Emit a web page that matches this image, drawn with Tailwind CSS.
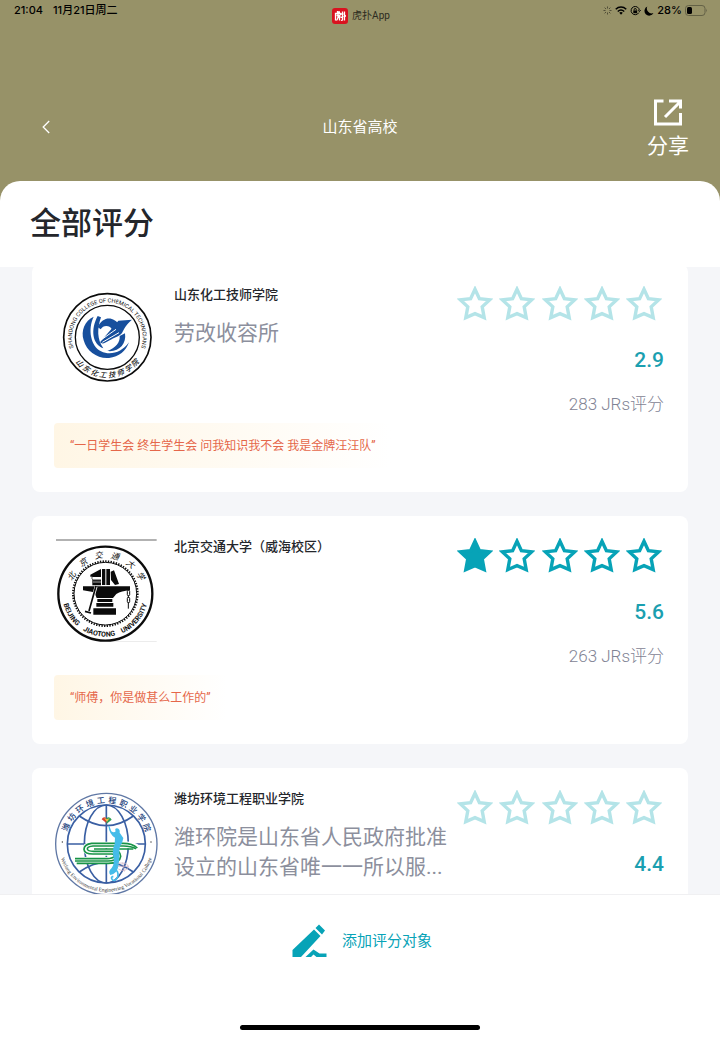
<!DOCTYPE html>
<html lang="zh-CN">
<head>
    <meta charset="UTF-8">
    <meta name="viewport" content="width=device-width, initial-scale=1.0">
    <title>山东省高校</title>
    <script src="https://cdn.jsdelivr.net/npm/@tailwindcss/browser@4"></script>
</head>
<body class="bg-white font-['Roboto','Noto_Sans_CJK_SC',sans-serif]">

    <!-- Shared shapes -->
    <svg class="hidden">
        <symbol id="star" viewBox="0 0 36 36">
            <path d="M18 3.2L22.4 12.6L32.6 13.9L25.2 20.8L27.2 31.6L18 27.6L8.8 31.6L10.8 20.8L3.4 13.9L13.6 12.6Z" fill="none" stroke="currentColor" stroke-width="3.4"/>
        </symbol>
        <symbol id="star-full" viewBox="0 0 36 36">
            <path d="M18 3.2L22.4 12.6L32.6 13.9L25.2 20.8L27.2 31.6L18 27.6L8.8 31.6L10.8 20.8L3.4 13.9L13.6 12.6Z" fill="currentColor" stroke="currentColor" stroke-width="3.4"/>
        </symbol>
    </svg>

    <div class="flex flex-col h-screen bg-[#979268]">
        <header class="shrink-0">
            <!-- Status bar -->
            <div class="grid grid-cols-3 items-start h-24 pl-3.5 pr-3 text-[11px] leading-[13px] text-black">
                <div class="flex gap-2.5 pt-1 font-medium font-['Inter','Noto_Sans_CJK_SC',sans-serif]">
                    <span>21:04</span>
                    <span>11月21日周二</span>
                </div>
                <div class="flex items-center justify-center gap-1 pt-2 text-[10px] leading-4 text-[#2c2b20]">
                    <span class="flex items-center justify-center size-4 rounded-[3px] bg-[#d9121f]">
                        <svg class="size-3" viewBox="0 0 24 24" fill="none" stroke="#fff" stroke-width="2.6">
                            <path d="M7 2V7M7 4H12M3 21V7H13V10M5 11H13M8 8V13H13M7 15V18L5 21M7 15H11V21M14 8H19M17 3V20L14 21M13 15L19 13M21 3V21M21 10L24 13"/>
                        </svg>
                    </span>
                    <span>虎扑App</span>
                </div>
                <div class="flex items-center justify-end gap-[3px] pt-1 font-medium font-['Inter',sans-serif]">
                    <svg class="size-[9px]" viewBox="0 0 18 18" stroke="#3d3b2b" stroke-width="1.6">
                        <path d="M9 1V5M9 13V17M1 9H5M13 9H17M3.3 3.3L6 6M12 12L14.7 14.7M3.3 14.7L6 12M12 6L14.7 3.3"/>
                    </svg>
                    <svg class="w-3 h-[9px]" viewBox="0 0 24 18" fill="none" stroke="#000" stroke-width="3">
                        <path d="M1.5 6.500C7.500 .8 16.500 .8 22.500 6.500M5.500 11C9.500 7.500 14.500 7.500 18.500 11"/>
                        <path d="M8.500 13.500Q12 10.800 15.500 13.500L12 17.500Z" fill="#000" stroke="none"/>
                    </svg>
                    <svg class="w-[11px] h-[10px]" viewBox="0 0 20 18" fill="none" stroke="#000" stroke-width="1.8">
                        <path d="M16 12A7.500 7.500 0 1 1 17 8M14.500 7.500L17 10L19.500 7.500"/>
                        <rect x="6" y="8" width="7" height="5" fill="#000" stroke="none"/>
                        <path d="M7.500 8V6.500A2 2 0 0 1 11.500 6.500V8"/>
                    </svg>
                    <svg class="size-[10px]" viewBox="0 0 18 18">
                        <path d="M6 1A8.500 8.500 0 1 0 17 12.500A8.500 8.500 0 0 1 6 1Z"/>
                    </svg>
                    <span>28%</span>
                    <svg class="w-[23px] h-[11px]" viewBox="0 0 46 22">
                        <rect x="1" y="1" width="39" height="20" rx="6" fill="none" stroke="#5f5c43" stroke-width="1.8"/>
                        <rect x="4" y="4" width="10" height="14" rx="3"/>
                        <path d="M42.500 7.500Q45.500 11 42.500 14.500Z" fill="#5f5c43"/>
                    </svg>
                </div>
            </div>

            <!-- Title bar -->
            <div class="grid grid-cols-3 items-center px-[31px] pb-[23px] text-white">
                <button type="button" aria-label="返回" class="w-[30px] h-5 flex items-center justify-center">
                    <svg class="w-2 h-3.5" viewBox="0 0 8 14" fill="none" stroke="#fff" stroke-width="1.3"><path d="M7.200 1L1.200 7L7.200 13"/></svg>
                </button>
                <h1 class="text-[15px] leading-5 text-center">山东省高校</h1>
                <button type="button" class="flex flex-col items-center justify-self-end">
                    <svg class="size-8" viewBox="0 0 32 32" fill="none" stroke="#fff" stroke-width="3">
                        <path d="M11.500 5H3.500V28H28.500V17M17 5H28.500V12.500M28 6L13 21"/>
                    </svg>
                    <span class="mt-1.5 text-[21px] leading-6">分享</span>
                </button>
            </div>
        </header>

        <h2 class="shrink-0 px-[30px] py-[22px] rounded-t-[20px] bg-white text-[31px] leading-[42px] font-medium text-[#24262b]">全部评分</h2>

        <!-- Rating list -->
        <main class="flex-1 min-h-0 overflow-hidden bg-[#f5f6f9] px-8">
            <div class="flex flex-col gap-6 -mt-[3px]">

                <article class="min-h-[228px] pt-[22px] pb-6 px-[22px] rounded-lg bg-white">
                    <div class="flex h-[137px] px-0.5">
                        <svg class="shrink-0 w-[102px] h-[104px]" viewBox="18 18 306 312">
                            <defs>
                                <path id="a1" d="M71.300 206.300A106 106 0 1 1 272.700 206.300"/>
                            </defs>
                            <circle cx="172" cy="172" r="131" fill="#fff" stroke="#0b0b0b" stroke-width="5"/>
                            <circle cx="172" cy="172" r="96" fill="none" stroke="#0b0b0b" stroke-width="4"/>
                            <text font-size="17" fill="#111" text-anchor="middle"><textPath href="#a1" startOffset="50%">SHANDONG COLLEGE OF CHEMICAL TECHNICIANS</textPath></text>
                            <g font-size="22" font-style="italic" font-weight="500" fill="#111" text-anchor="middle">
                                <text x="172" y="293" transform="rotate(47 172 172)">山</text>
                                <text x="172" y="293" transform="rotate(34 172 172)">东</text>
                                <text x="172" y="293" transform="rotate(20 172 172)">化</text>
                                <text x="172" y="293" transform="rotate(7 172 172)">工</text>
                                <text x="172" y="293" transform="rotate(-7 172 172)">技</text>
                                <text x="172" y="293" transform="rotate(-20 172 172)">师</text>
                                <text x="172" y="293" transform="rotate(-34 172 172)">学</text>
                                <text x="172" y="293" transform="rotate(-47 172 172)">院</text>
                            </g>
                            <g fill="#174f9d">
                                <path d="M131 110C104 122 92 152 101 181C110 214 142 237 177 234C207 231 228 213 237 187C216 217 181 228 153 214C123 199 112 149 131 110Z"/>
                                <path d="M143 108C121 150 127 192 160 205C141 178 141 147 153 112Z"/>
                                <path d="M143 141C160 106 192 110 207 134L193 155L180 141C170 135 158 137 152 148Z"/>
                                <path d="M150 187L186 145L205 122L246 119C229 132 221 149 216 159C208 170 191 173 179 181C163 191 157 193 150 187Z"/>
                                <path d="M225 160C230 193 207 217 172 213C197 204 211 187 209 168Z"/>
                            </g>
                            <path d="M153 180L198 148M157 187L207 158" stroke="#fff" stroke-width="3"/>
                        </svg>
                        <div class="flex-1 min-w-0 ml-4">
                            <h3 class="text-[13px] leading-[18px] font-medium text-[#24262b]">山东化工技师学院</h3>
                            <p class="mt-3.5 text-[21px] leading-[30px] text-[#8c8f9d]">劳改收容所</p>
                        </div>
                        <div class="shrink-0 w-[207px] ml-2 text-right">
                            <div class="flex justify-between pr-0.5 text-[#b4e4e8]" role="img" aria-label="0 星">
                                <svg class="size-9"><use href="#star"/></svg>
                                <svg class="size-9"><use href="#star"/></svg>
                                <svg class="size-9"><use href="#star"/></svg>
                                <svg class="size-9"><use href="#star"/></svg>
                                <svg class="size-9"><use href="#star"/></svg>
                            </div>
                            <p class="mt-[26px] text-[21px] leading-6 font-medium text-[#1b9fb0]">2.9</p>
                            <p class="mt-5 text-[17px] leading-6 font-light text-[#7f8394]">283 JRs评分</p>
                        </div>
                    </div>
                    <p class="w-fit pt-0.5 px-4 rounded bg-linear-to-r from-[#fff6e5] to-white text-[12px] leading-[43px] text-[#e5674a]">“一日学生会 终生学生会 问我知识我不会 我是金牌汪汪队”</p>
                </article>

                <article class="min-h-[228px] pt-[22px] pb-6 px-[22px] rounded-lg bg-white">
                    <div class="flex h-[137px] px-0.5">
                        <svg class="shrink-0 w-[102px] h-[104px]" viewBox="18 24 306 312">
                            <defs>
                                <path id="b1" d="M37 191A129 129 0 0 0 295 191"/>
                            </defs>
                            <path d="M18 30H320" stroke="#999" stroke-width="4"/>
                            <path d="M180 335H320" stroke="#ddd" stroke-width="2"/>
                            <circle cx="166" cy="191" r="141" fill="#fff" stroke="#0b0b0b" stroke-width="7"/>
                            <circle cx="166" cy="191" r="94" fill="none" stroke="#0b0b0b" stroke-width="3"/>
                            <circle cx="166" cy="191" r="97" fill="none" stroke="#0b0b0b" stroke-width="6" stroke-dasharray="4 4"/>
                            <g font-size="25" font-style="italic" fill="#111" text-anchor="middle">
                                <text transform="translate(72 143) rotate(-60)">北</text>
                                <text transform="translate(104 105) rotate(-34)">京</text>
                                <text transform="translate(147 85) rotate(-10)">交</text>
                                <text transform="translate(193 87) rotate(14)">通</text>
                                <text transform="translate(236 109) rotate(38)">大</text>
                                <text transform="translate(264 142) rotate(60)">学</text>
                            </g>
                            <text font-size="21" font-weight="700" fill="#111" text-anchor="middle"><textPath href="#b1" startOffset="50%">BEIJING &#160; &#160;JIAOTONG &#160; &#160;UNIVERSITY</textPath></text>
                            <g fill="#0b0b0b">
                                <path d="M121 134L153 117V141H125V147H153V166H127V140H121ZM156 117H166V165H156ZM169 117H180V165H169ZM182 125L192 121L207 162L195 165L183 150Z"/>
                                <path d="M99 169H240V181Q214 183 199 192L189 204H140L133 187L99 181Z"/>
                                <path d="M142 207H187V216H142ZM139 219H190V230H139ZM130 235H198V254H130Z"/>
                            </g>
                            <path d="M129 149H153M129 156H153" stroke="#fff" stroke-width="2"/>
                            <path d="M138 170L117 245" stroke="#fff" stroke-width="9"/>
                            <path d="M138 168L117 243M105 244L123 249" stroke="#0b0b0b" stroke-width="5"/>
                            <g fill="none" stroke="#0b0b0b" stroke-width="3">
                                <rect x="232" y="181" width="7" height="16" rx="3"/>
                                <rect x="232" y="202" width="7" height="16" rx="3"/>
                                <path d="M235 196V204M235 217V236"/>
                            </g>
                        </svg>
                        <div class="flex-1 min-w-0 ml-4">
                            <h3 class="text-[13px] leading-[18px] font-medium text-[#24262b]">北京交通大学（威海校区）</h3>
                        </div>
                        <div class="shrink-0 w-[207px] ml-2 text-right">
                            <div class="flex justify-between pr-0.5 text-[#07a3b7]" role="img" aria-label="1 星">
                                <svg class="size-9"><use href="#star-full"/></svg>
                                <svg class="size-9"><use href="#star"/></svg>
                                <svg class="size-9"><use href="#star"/></svg>
                                <svg class="size-9"><use href="#star"/></svg>
                                <svg class="size-9"><use href="#star"/></svg>
                            </div>
                            <p class="mt-[26px] text-[21px] leading-6 font-medium text-[#1b9fb0]">5.6</p>
                            <p class="mt-5 text-[17px] leading-6 font-light text-[#7f8394]">263 JRs评分</p>
                        </div>
                    </div>
                    <p class="w-fit pt-0.5 px-4 rounded bg-linear-to-r from-[#fff6e5] to-white text-[12px] leading-[43px] text-[#e5674a]">“师傅，你是做甚么工作的”</p>
                </article>

                <article class="min-h-[228px] pt-[22px] pb-6 px-[22px] rounded-lg bg-white">
                    <div class="flex h-[137px] px-0.5">
                        <svg class="shrink-0 w-[102px] h-[104px] overflow-visible" viewBox="18 30 306 312">
                            <defs>
                                <path id="c2" d="M26 192A143 143 0 0 0 312 192"/>
                            </defs>
                            <circle cx="169" cy="192" r="152" fill="#fff" stroke="#6078a5" stroke-width="4"/>
                            <g fill="none" stroke="#3a5fa3" stroke-width="5">
                                <circle cx="169" cy="192" r="117"/>
                                <ellipse cx="169" cy="192" rx="66" ry="117"/>
                                <path d="M169 75V309M52 192H286M88 108Q169 166 250 108M88 276Q169 218 250 276"/>
                            </g>
                            <g font-size="24" font-weight="500" fill="#22427c" text-anchor="middle">
                                <text x="169" y="69" transform="rotate(-67 169 192)">潍</text>
                                <text x="169" y="69" transform="rotate(-52 169 192)">坊</text>
                                <text x="169" y="69" transform="rotate(-37 169 192)">环</text>
                                <text x="169" y="69" transform="rotate(-22 169 192)">境</text>
                                <text x="169" y="69" transform="rotate(-7 169 192)">工</text>
                                <text x="169" y="69" transform="rotate(8 169 192)">程</text>
                                <text x="169" y="69" transform="rotate(23 169 192)">职</text>
                                <text x="169" y="69" transform="rotate(38 169 192)">业</text>
                                <text x="169" y="69" transform="rotate(53 169 192)">学</text>
                                <text x="169" y="69" transform="rotate(68 169 192)">院</text>
                            </g>
                            <text font-family="Liberation Serif" font-size="16" fill="#333" text-anchor="middle"><textPath href="#c2" startOffset="50%">Weifang Environmental Engineering Vocational College</textPath></text>
                            <circle cx="37" cy="186" r="2" fill="#333"/>
                            <circle cx="303" cy="186" r="2" fill="#333"/>
                            <path d="M262 204Q247 192 220 195H126Q105 197 108 209Q109 217 129 217H190Q206 218 202 230Q198 240 174 241H75" fill="none" stroke="#fff" stroke-width="20"/>
                            <g fill="none" stroke="#189447" stroke-width="5">
                                <path d="M262 204Q247 190 220 190H125Q102 193 102 208Q103 222 129 222H186Q195 223 192 230Q188 235 171 236H75"/>
                                <path d="M258 206Q243 198 220 198H129Q112 199 112 207Q113 214 131 214H190Q206 217 202 230Q198 242 174 243H75"/>
                                <path d="M250 207H132M80 250H175Q210 249 212 229Q211 211 189 207"/>
                            </g>
                            <path d="M175 137L178 138L184 154Q192 160 197 154Q193 145 201 145Q211 147 209 158L220 174L216 190Q210 194 208 211Q209 236 206 255Q201 283 181 285Q173 275 185 264Q193 255 191 235Q185 211 194 192L195 173Q178 163 175 137Z" fill="#45bce9"/>
                            <path d="M190 267Q208 271 203 290Q198 304 188 300Q180 292 190 289" fill="none" stroke="#45bce9" stroke-width="5"/>
                            <path d="M203 250Q236 245 235 263Q222 278 205 267M218 248L223 275M203 259H236" fill="none" stroke="#cbaec0" stroke-width="2"/>
                            <path d="M155 118Q160 108 169 114L170 130Z" fill="#d8402d"/>
                            <path d="M169 114Q180 107 185 119L170 131Z" fill="#2b9f57"/>
                            <path d="M162 114L171 118L179 114L171 125Z" fill="#f0be45"/>
                        </svg>
                        <div class="flex-1 min-w-0 ml-4">
                            <h3 class="text-[13px] leading-[18px] font-medium text-[#24262b]">潍坊环境工程职业学院</h3>
                            <p class="mt-3.5 text-[21px] leading-[30px] text-[#8c8f9d]">潍环院是山东省人民政府批准设立的山东省唯一一所以服...</p>
                        </div>
                        <div class="shrink-0 w-[207px] ml-2 text-right">
                            <div class="flex justify-between pr-0.5 text-[#b4e4e8]" role="img" aria-label="0 星">
                                <svg class="size-9"><use href="#star"/></svg>
                                <svg class="size-9"><use href="#star"/></svg>
                                <svg class="size-9"><use href="#star"/></svg>
                                <svg class="size-9"><use href="#star"/></svg>
                                <svg class="size-9"><use href="#star"/></svg>
                            </div>
                            <p class="mt-[26px] text-[21px] leading-6 font-medium text-[#1b9fb0]">4.4</p>
                        </div>
                    </div>
                </article>
            </div>
        </main>

        <!-- Bottom action -->
        <footer class="shrink-0 flex flex-col items-center justify-between h-[143px] pt-7 pb-[7px] bg-white border-t border-[#f0f0f2]">
            <button type="button" class="flex items-center gap-3.5 pl-1 text-[15px] leading-5 text-[#07a3b7]">
                <svg class="w-9 h-9" viewBox="0 0 36 36" fill="currentColor">
                    <path d="M.5 27L22 6.500L28.500 13L9 34H.5ZM23.500 5L27 1.500L33 7.500L30 11.500ZM13.500 34L21.500 26.500L27.500 30.500H34.500V34H24.500L21.500 31.500L19 34Z"/>
                </svg>
                <span>添加评分对象</span>
            </button>
            <div class="w-1/3 h-[5px] rounded-full bg-black"></div>
        </footer>
    </div>

</body>
</html>
